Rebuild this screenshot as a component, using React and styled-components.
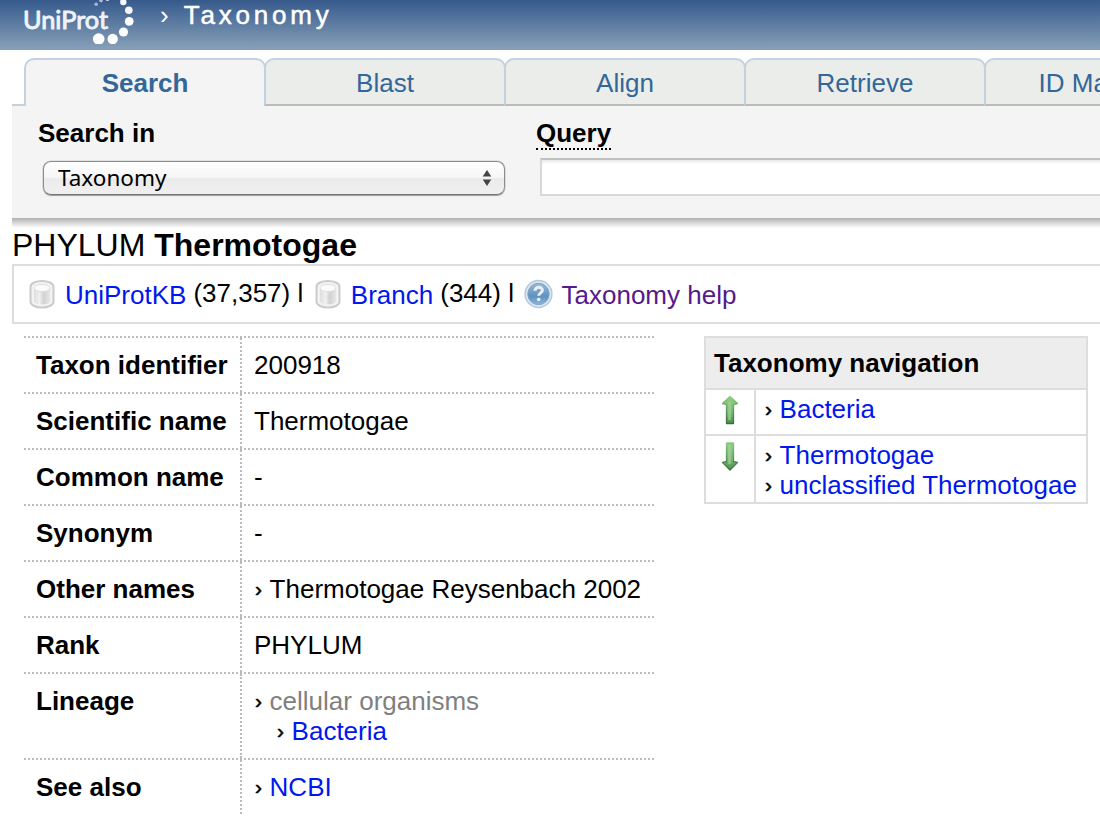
import React from "react";
import styled, { createGlobalStyle } from "styled-components";

const GlobalStyle = createGlobalStyle`
  * { box-sizing: border-box; }
  body {
    margin: 0;
    background: #fff;
    color: #000;
    font: 26px/30px "Liberation Sans", Arial, sans-serif;
    overflow: hidden;
  }
`;

const Page = styled.div`
  width: 1100px;
  height: 834px;
  overflow: hidden;
`;

const Header = styled.header`
  display: flex;
  height: 50px;
  padding-left: 20px;
  background: linear-gradient(#365a8c, #88a1ba);
  color: #fff;
`;

const Crumb = styled.div`
  display: flex;
  margin-left: 20px;
`;

const CrumbName = styled.span`
  margin-left: 15px;
  letter-spacing: 3.8px;
  -webkit-text-stroke: 0.5px #fff;
`;

const Chevron = styled.span`
  display: inline-block;
  width: 15.6px;
  padding-left: 1px;
  font-size: 21px;
  line-height: 20px;
  vertical-align: 2px;
  -webkit-text-stroke: 0.5px currentColor;
`;

const TabStrip = styled.nav`
  display: flex;
  width: 1300px;
  height: 48px;
  margin: 8px 0 0 12px;
  &::before {
    content: "";
    width: 12px;
    border-bottom: 2px solid #c3d1da;
  }
`;

const Tab = styled.a`
  flex: none;
  width: 242px;
  margin-right: -2px;
  height: 48px;
  padding-top: 8px;
  text-align: center;
  color: #336699;
  font-weight: ${(p) => (p.$active ? "bold" : "normal")};
  background: ${(p) => (p.$active ? "#f4f4f4" : "#ebedea")};
  border: 2px solid #c2d2df;
  border-bottom: ${(p) => (p.$active ? "none" : "2px solid #bbb")};
  border-radius: 10px 10px 0 0;
`;

const SearchPanel = styled.section`
  display: flex;
  width: 1200px;
  height: 112px;
  margin-left: 12px;
  padding: 12px 0 0 26px;
  background: #f4f4f4;
`;

const PanelShadow = styled.div`
  height: 10px;
  margin-left: 12px;
  background: linear-gradient(#b0b0b0, #d4d4d4 45%, #fff);
`;

const Field = styled.div`
  width: ${(p) => p.$width}px;
`;

const FieldLabel = styled.span`
  display: block;
  width: max-content;
  height: 32px;
  font-weight: bold;
  border-bottom: ${(p) => (p.$hint ? "2px dotted #000" : "none")};
`;

const Picker = styled.div`
  display: flex;
  align-items: center;
  justify-content: space-between;
  width: 462px;
  height: 34px;
  margin: 11px 0 0 5px;
  padding: 0 11px 0 14px;
  font: 22.5px/30px "Noto Sans", sans-serif;
  border: 1px solid #8c8c8c;
  border-bottom-color: #747474;
  border-radius: 8px;
  background: linear-gradient(#fff, #f6f6f6 48%, #ebebeb 52%, #f0f0f0);
  box-shadow: 0 0 0 0.5px rgba(0, 0, 0, 0.15), 0 1px 1px rgba(0, 0, 0, 0.3);
`;

const QueryBox = styled.div`
  height: 38px;
  margin: 8px 0 0 4px;
  background: #fff;
  border: 2px solid #d8d8d8;
  border-top-color: #c0c0c0;
  box-shadow: inset 0 3px 3px -1px #e8e8e8;
`;

const Title = styled.h1`
  margin: 0 0 2px 12px;
  font-size: 32px;
  line-height: 34px;
  font-weight: normal;
`;

const LinkBar = styled.div`
  display: flex;
  align-items: flex-start;
  width: 1200px;
  height: 60px;
  margin-left: 12px;
  padding: 13px 0 0 12px;
  border: 2px solid #ddd;
  white-space: pre;
`;

const BarIcon = styled.svg`
  flex: none;
  width: 32px;
  height: 32px;
  margin: -1px 7px 0 0;
`;

const BarLink = styled.a`
  margin-top: 1px;
  color: ${(p) => (p.$visited ? "#551a8b" : "#0018ee")};
`;

const BarText = styled.span`
  margin: -1px 8.6px 0 7px;
`;

const Content = styled.main`
  display: flex;
  align-items: flex-start;
  gap: 50px;
  padding: 12px 0 0 24px;
`;

const Facts = styled.dl`
  width: 630px;
  margin: 0;
`;

const Fact = styled.div`
  display: flex;
  border-top: 2px dotted #bbb;
`;

const FactName = styled.dt`
  width: 218px;
  padding: 12px;
  font-weight: bold;
  white-space: nowrap;
  border-right: 2px dotted #bbb;
`;

const FactValue = styled.dd`
  margin: 0;
  padding: 12px;
  white-space: nowrap;
`;

const Item = styled.div`
  height: 30px;
  padding-left: ${(p) => (p.$nested ? 22 : 0)}px;
  white-space: nowrap;
`;

const Link = styled.a`
  color: #0018ee;
`;

const Muted = styled.span`
  color: #808080;
`;

const NavBox = styled.aside`
  width: 384px;
  border: 2px solid #ddd;
`;

const NavTitle = styled.h2`
  margin: 0;
  padding: 10px 8px;
  font-size: 26px;
  line-height: 30px;
  background: #ededed;
`;

const NavRow = styled.div`
  display: flex;
  height: ${(p) => p.$height}px;
  border-top: 2px solid #ddd;
`;

const NavIcon = styled.div`
  width: 50px;
  padding: 4px 0 0 8px;
  border-right: 2px solid #ddd;
`;

const NavLinks = styled.div`
  padding: 4px 0 0 8px;
`;

function Logo() {
  const dots = [
    [96.2, 4.2, 1.8, 0.55], [101, 0.6, 1.8, 0.6], [107.5, -1, 2, 0.8],
    [123.3, 2, 3.2, 0.95], [128.8, 10.2, 3.8, 0.95], [129.2, 21.3, 4.4, 1],
    [123.5, 32, 4.6, 1], [112.7, 39, 5.2, 1], [98.7, 39, 5.8, 1],
  ];
  return (
    <svg width="120" height="50" viewBox="20 0 120 50">
      <clipPath id="logoBox">
        <rect x="24" y="0" width="110" height="44" />
      </clipPath>
      <g clipPath="url(#logoBox)">
        {dots.map(([x, y, r, o]) => (
          <circle key={x} cx={x} cy={y} r={r} fill="#fff" opacity={o} />
        ))}
        <text
          x="23" y="29.3" fill="#eef3f9" stroke="#eef3f9" strokeWidth="0.9"
          strokeLinejoin="round" fontFamily="Lato, sans-serif" fontSize="24.5"
          textLength="85" lengthAdjust="spacingAndGlyphs"
        >
          UniProt
        </text>
      </g>
    </svg>
  );
}

function Database() {
  return (
    <BarIcon viewBox="0 0 32 32">
      <defs>
        <linearGradient id="can">
          <stop offset="0" stopColor="#dedede" />
          <stop offset=".35" stopColor="#f0f0f0" />
          <stop offset=".6" stopColor="#d2d2d2" />
          <stop offset="1" stopColor="#e6e6e6" />
        </linearGradient>
      </defs>
      <path d="M4.500 9C4.500 1 27.500 1 27.500 9V23.500C27.500 31.500 4.500 31.500 4.500 23.500Z" fill="#f3f3f3" stroke="#cbcbcb" strokeWidth="2" />
      <path d="M8 10V23C8 27.500 24 27.500 24 23V10Z" fill="url(#can)" />
      <ellipse cx="16" cy="10" rx="8" ry="3.500" fill="#fbfbfb" stroke="#dcdcdc" strokeWidth="0.800" />
    </BarIcon>
  );
}

function Help() {
  return (
    <BarIcon viewBox="0 0 32 32">
      <defs>
        <linearGradient id="ball" x2="0" y2="1">
          <stop offset="0" stopColor="#9bb9d7" />
          <stop offset=".6" stopColor="#5f92c0" />
          <stop offset="1" stopColor="#8db5d8" />
        </linearGradient>
      </defs>
      <circle cx="15.500" cy="16" r="13.400" fill="#dbe6ef" stroke="#b5cbdd" strokeWidth="1.500" />
      <circle cx="15.500" cy="16" r="10.700" fill="url(#ball)" stroke="#7fa5c8" strokeWidth="1" />
      <path d="M12 12.800C12 8.100 19.600 8.300 19.400 12.500C19.300 15 15.800 14.800 15.700 17.800" fill="none" stroke="#e9f0f6" strokeWidth="3" />
      <circle cx="15.700" cy="21.500" r="1.800" fill="#e9f0f6" />
    </BarIcon>
  );
}

function Arrow({ down }) {
  const id = down ? "arrowDown" : "arrowUp";
  const shape = down
    ? "M12.500 3H19.500V21.500L23.500 22.500 16 30 8.500 22.500 12.500 21.500Z"
    : "M16 2.500L23.500 9.500 19.500 10.500V29.500H12.500V10.500L8.500 9.500Z";
  return (
    <svg width="32" height="32" viewBox="0 0 32 32" display="block">
      <defs>
        <linearGradient id={id} x2="0" y2="1">
          <stop offset="0" stopColor="#8fcf85" />
          <stop offset=".6" stopColor="#79b971" />
          <stop offset="1" stopColor="#4f8c4e" />
        </linearGradient>
        <linearGradient id={id + "Edge"} x2="0" y2="1">
          <stop offset="0" stopColor="#8cc883" />
          <stop offset="1" stopColor="#386f39" />
        </linearGradient>
      </defs>
      <path d={shape} fill={`url(#${id})`} stroke={`url(#${id}Edge)`} strokeWidth="1.300" strokeLinejoin="round" />
      <path d={down ? "M15.500 5V24" : "M15.500 8V26"} stroke="#a9d6a0" strokeWidth="2.500" opacity=".65" />
    </svg>
  );
}

const tabs = ["Search", "Blast", "Align", "Retrieve", "ID Mapping"];

const facts = [
  ["Taxon identifier", "200918"],
  ["Scientific name", "Thermotogae"],
  ["Common name", "-"],
  ["Synonym", "-"],
  ["Other names", <Item><Chevron>›</Chevron>Thermotogae Reysenbach 2002</Item>],
  ["Rank", "PHYLUM"],
  [
    "Lineage",
    <>
      <Item><Chevron>›</Chevron><Muted>cellular organisms</Muted></Item>
      <Item $nested><Chevron>›</Chevron><Link>Bacteria</Link></Item>
    </>,
  ],
  ["See also", <Item><Chevron>›</Chevron><Link>NCBI</Link></Item>],
];

export default function App() {
  return (
    <Page>
      <GlobalStyle />
      <Header>
        <Logo />
        <Crumb>
          <span>›</span>
          <CrumbName>Taxonomy</CrumbName>
        </Crumb>
      </Header>
      <TabStrip>
        {tabs.map((name, i) => (
          <Tab key={name} $active={i === 0}>{name}</Tab>
        ))}
      </TabStrip>
      <SearchPanel>
        <Field $width={498}>
          <FieldLabel>Search in</FieldLabel>
          <Picker>
            Taxonomy
            <svg width="12" height="20" viewBox="0 0 12 20">
              <path d="M6 2L10.300 8.500H1.700ZM6 18L10.300 11.500H1.700Z" fill="#444" />
            </svg>
          </Picker>
        </Field>
        <Field $width={640}>
          <FieldLabel $hint>Query</FieldLabel>
          <QueryBox />
        </Field>
      </SearchPanel>
      <PanelShadow />
      <Title>PHYLUM <b>Thermotogae</b></Title>
      <LinkBar>
        <Database />
        <BarLink>UniProtKB</BarLink>
        <BarText>(37,357) l</BarText>
        <Database />
        <BarLink>Branch</BarLink>
        <BarText>(344) l</BarText>
        <Help />
        <BarLink $visited>Taxonomy help</BarLink>
      </LinkBar>
      <Content>
        <Facts>
          {facts.map(([name, value]) => (
            <Fact key={name}>
              <FactName>{name}</FactName>
              <FactValue>{value}</FactValue>
            </Fact>
          ))}
        </Facts>
        <NavBox>
          <NavTitle>Taxonomy navigation</NavTitle>
          <NavRow $height={46}>
            <NavIcon><Arrow /></NavIcon>
            <NavLinks>
              <Item><Chevron>›</Chevron><Link>Bacteria</Link></Item>
            </NavLinks>
          </NavRow>
          <NavRow $height={68}>
            <NavIcon><Arrow down /></NavIcon>
            <NavLinks>
              <Item><Chevron>›</Chevron><Link>Thermotogae</Link></Item>
              <Item><Chevron>›</Chevron><Link>unclassified Thermotogae</Link></Item>
            </NavLinks>
          </NavRow>
        </NavBox>
      </Content>
    </Page>
  );
}
